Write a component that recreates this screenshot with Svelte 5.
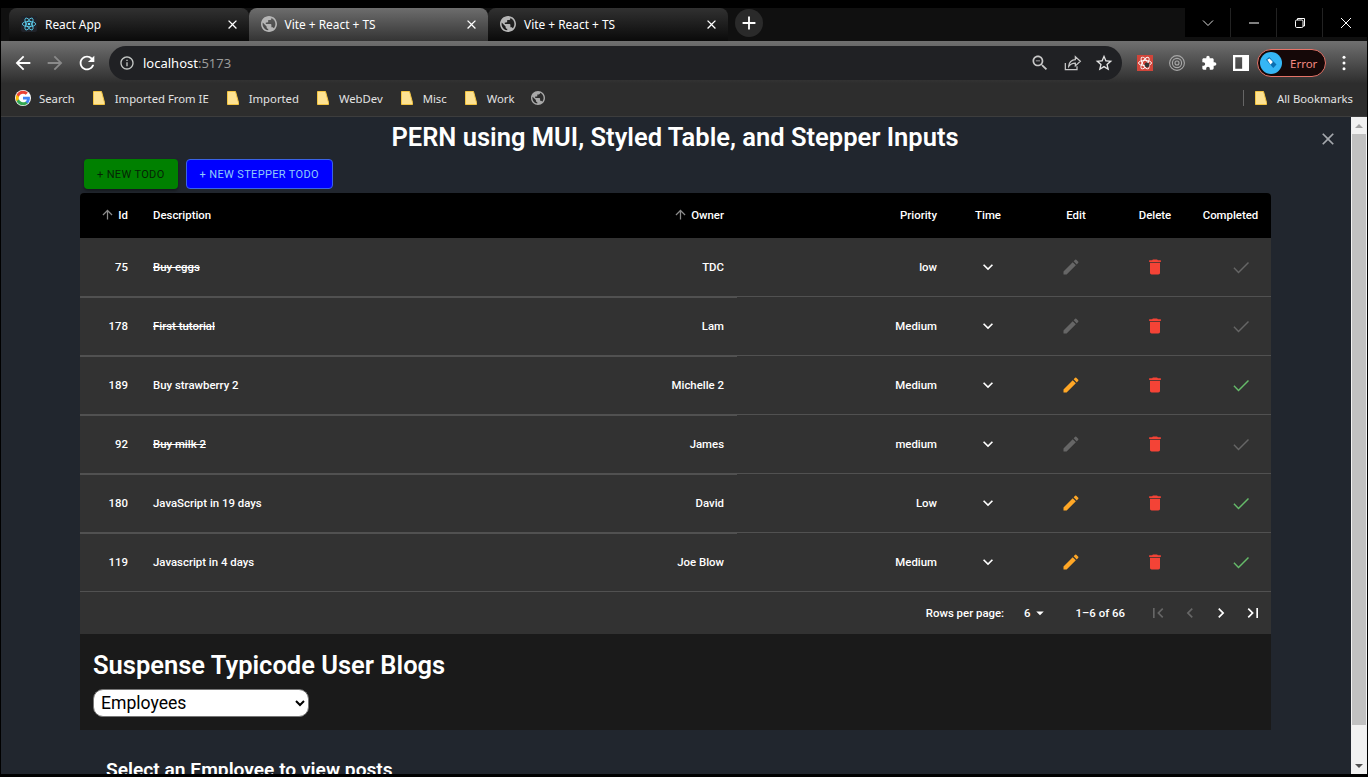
<script lang="ts">
	const rows = [
		{ id: 75, text: 'Buy eggs', owner: 'TDC', priority: 'low', done: true },
		{ id: 178, text: 'First tutorial', owner: 'Lam', priority: 'Medium', done: true },
		{ id: 189, text: 'Buy strawberry 2', owner: 'Michelle 2', priority: 'Medium', done: false },
		{ id: 92, text: 'Buy milk 2', owner: 'James', priority: 'medium', done: true },
		{ id: 180, text: 'JavaScript in 19 days', owner: 'David', priority: 'Low', done: false },
		{ id: 119, text: 'Javascript in 4 days', owner: 'Joe Blow', priority: 'Medium', done: false }
	];

	const tabs = [
		{ title: 'React App', active: false, react: true },
		{ title: 'Vite + React + TS', active: true, react: false },
		{ title: 'Vite + React + TS', active: false, react: false }
	];

	const marks = ['Imported From IE', 'Imported', 'WebDev', 'Misc', 'Work'];

	const globe =
		'M12 2C6.48 2 2 6.48 2 12s4.48 10 10 10 10-4.48 10-10S17.52 2 12 2zm-1 17.93c-3.95-.49-7-3.85-7-7.93 0-.62.08-1.21.21-1.79L9 15v1c0 1.1.9 2 2 2v1.93zm6.9-2.54c-.26-.81-1-1.39-1.9-1.39h-1v-3c0-.55-.45-1-1-1H8v-2h2c.55 0 1-.45 1-1V7h2c1.1 0 2-.9 2-2v-.41c2.93 1.19 5 4.06 5 7.41 0 2.08-.8 3.97-2.1 5.39z';
	const close =
		'M19 6.41 17.59 5 12 10.59 6.41 5 5 6.41 10.59 12 5 17.59 6.41 19 12 13.41 17.59 19 19 17.59 13.41 12z';
	const arrowUp = 'M4 12l1.41 1.41L11 7.83V20h2V7.83l5.58 5.59L20 12l-8-8-8 8z';
</script>

<div class="window">
	<div class="tabstrip">
		{#each tabs as tab}
			<div class="tab" class:active={tab.active}>
				{#if tab.react}
					<svg class="favicon" viewBox="0 0 24 24" fill="none" stroke="#61dafb" stroke-width="1.2">
						<rect x="0" y="0" width="24" height="24" rx="3" fill="#20232a" stroke="none" />
						<circle cx="12" cy="12" r="2" fill="#61dafb" stroke="none" />
						<ellipse cx="12" cy="12" rx="10" ry="4" />
						<ellipse cx="12" cy="12" rx="10" ry="4" transform="rotate(60 12 12)" />
						<ellipse cx="12" cy="12" rx="10" ry="4" transform="rotate(120 12 12)" />
					</svg>
				{:else}
					<svg class="favicon" viewBox="2 2 20 20" fill="#b5b5b5"><path d={globe} /></svg>
				{/if}
				<span class="tab-title">{tab.title}</span>
				<svg class="tab-close" viewBox="0 0 24 24" fill="#fff"><path d={close} /></svg>
			</div>
		{/each}
		<div class="new-tab">
			<svg viewBox="0 0 24 24" fill="#fff"><path d="M19 13h-6v6h-2v-6H5v-2h6V5h2v6h6v2z" /></svg>
		</div>
		<div class="win-controls">
			<div class="win-btn">
				<svg viewBox="0 0 12 12" fill="none" stroke="#ddd"><path d="M1 3.5l5 5 5-5" /></svg>
			</div>
			<div class="win-btn">
				<svg viewBox="0 0 12 12" fill="none" stroke="#fff"><path d="M1 6h10" /></svg>
			</div>
			<div class="win-btn">
				<svg viewBox="0 0 12 12" fill="none" stroke="#fff"><rect x="1.5" y="3" width="7.5" height="7.5" rx="1.2" /><path d="M3.5 3V1.5h7V9H9" /></svg>
			</div>
			<div class="win-btn last">
				<svg viewBox="0 0 12 12" fill="none" stroke="#fff"><path d="M1 1l10 10M11 1L1 11" /></svg>
			</div>
		</div>
	</div>

	<div class="toolbar">
		<svg class="nav" viewBox="0 0 24 24" fill="#fff"><path d="M20 11H7.83l5.59-5.59L12 4l-8 8 8 8 1.41-1.41L7.83 13H20v-2z" /></svg>
		<svg class="nav" viewBox="0 0 24 24" fill="#8a8a8a"><path d="M12 4l-1.41 1.41L16.17 11H4v2h12.17l-5.58 5.59L12 20l8-8z" /></svg>
		<svg class="nav" viewBox="0 0 24 24" fill="#fff"><path d="M17.65 6.35C16.2 4.9 14.21 4 12 4c-4.42 0-7.99 3.58-7.99 8s3.57 8 7.99 8c3.73 0 6.84-2.55 7.73-6h-2.08c-.82 2.33-3.04 4-5.65 4-3.31 0-6-2.69-6-6s2.69-6 6-6c1.66 0 3.14.69 4.22 1.78L13 11h7V4l-2.35 2.35z" /></svg>
		<div class="address">
			<svg class="info" viewBox="0 0 24 24" fill="#c4c7c5"><path d="M11 7h2v2h-2zm0 4h2v6h-2zm1-9C6.48 2 2 6.48 2 12s4.48 10 10 10 10-4.48 10-10S17.52 2 12 2zm0 18c-4.41 0-8-3.59-8-8s3.59-8 8-8 8 3.59 8 8-3.59 8-8 8z" /></svg>
			<span class="url">localhost<span class="port">:5173</span></span>
			<div class="addr-icons">
				<svg viewBox="0 0 24 24" fill="#c7c7c7"><path d="M15.5 14h-.79l-.28-.27C15.41 12.59 16 11.11 16 9.5 16 5.91 13.09 3 9.5 3S3 5.91 3 9.5 5.91 16 9.5 16c1.61 0 3.09-.59 4.23-1.57l.27.28v.79l5 4.99L20.49 19l-4.99-5zm-6 0C7.01 14 5 11.99 5 9.5S7.01 5 9.5 5 14 7.01 14 9.5 11.99 14 9.5 14zM7 9h5v1H7z" /></svg>
				<svg viewBox="0 0 24 24" fill="none" stroke="#c7c7c7" stroke-width="1.5"><path d="M4 12v8h14v-4M8 16c0-5 4-8 8-8V4.5L22 10l-6 5.5V12c-3 0-6 1-8 4z" /></svg>
				<svg viewBox="0 0 24 24" fill="#e3e3e3"><path d="M22 9.24l-7.19-.62L12 2 9.19 8.63 2 9.24l5.46 4.73L5.82 21 12 17.27 18.18 21l-1.63-7.03L22 9.24zM12 15.4l-3.76 2.27 1-4.28-3.32-2.88 4.38-.38L12 6.1l1.71 4.04 4.38.38-3.32 2.88 1 4.28L12 15.4z" /></svg>
			</div>
		</div>
		<div class="ext-icons">
			<svg viewBox="0 0 16 16" fill="none" stroke="#fff" stroke-width="0.9">
				<rect width="16" height="16" fill="#d0453a" stroke="none" />
				<ellipse cx="8" cy="8" rx="6.5" ry="2.6" />
				<ellipse cx="8" cy="8" rx="6.5" ry="2.6" transform="rotate(60 8 8)" />
				<ellipse cx="8" cy="8" rx="6.5" ry="2.6" transform="rotate(120 8 8)" />
				<circle cx="10" cy="10" r="2.4" fill="#333" stroke="none" />
			</svg>
			<svg viewBox="0 0 16 16" fill="none" stroke="#a8a8a8" stroke-width="1.1">
				<circle cx="8" cy="8" r="7.4" />
				<circle cx="8" cy="8" r="4.6" />
				<circle cx="8" cy="8" r="2" />
			</svg>
			<svg viewBox="0 0 24 24" fill="#fff"><path d="M20.5 11H19V7c0-1.1-.9-2-2-2h-4V3.5C13 2.12 11.88 1 10.5 1S8 2.12 8 3.5V5H4c-1.1 0-1.99.9-1.99 2v3.8H3.5c1.49 0 2.7 1.21 2.7 2.7s-1.21 2.7-2.7 2.7H2V20c0 1.1.9 2 2 2h3.8v-1.5c0-1.49 1.21-2.7 2.7-2.7 1.49 0 2.7 1.21 2.7 2.7V22H17c1.1 0 2-.9 2-2v-4h1.5c1.38 0 2.5-1.12 2.5-2.5S21.88 11 20.5 11z" /></svg>
			<svg viewBox="0 0 14 14"><path fill="#fff" fill-rule="evenodd" d="M0 0h14v14H0zM2 2v10h6V2z" /></svg>
		</div>
		<div class="profile">
			<svg viewBox="0 0 24 24">
				<circle cx="12" cy="12" r="12" fill="#35b6f5" />
				<path d="M6.5 8.5l3.5-3 8 8-3.5 4z" fill="#0b6fb0" />
				<path d="M8 8.5l2.5-1.5 3.5 4-2.5 2.5z" fill="#fff" />
			</svg>
			<span>Error</span>
		</div>
		<svg class="more" viewBox="0 0 4 16" fill="#fff">
			<circle cx="2" cy="2.2" r="1.5" /><circle cx="2" cy="8" r="1.5" /><circle cx="2" cy="13.8" r="1.5" />
		</svg>
	</div>

	<div class="bookmarks">
		<div class="mark">
			<svg class="g" viewBox="-1 -1 20 20">
				<circle cx="9" cy="9" r="10" fill="#fff" />
				<path fill="#4285F4" d="M17.64 9.2c0-.637-.057-1.251-.164-1.84H9v3.481h4.844c-.209 1.125-.843 2.078-1.796 2.717v2.258h2.908c1.702-1.567 2.684-3.874 2.684-6.615z" />
				<path fill="#34A853" d="M9 18c2.43 0 4.467-.806 5.956-2.18l-2.908-2.259c-.806.54-1.837.86-3.048.86-2.344 0-4.328-1.584-5.036-3.711H.957v2.332A8.997 8.997 0 0 0 9 18z" />
				<path fill="#FBBC05" d="M3.964 10.71A5.41 5.41 0 0 1 3.682 9c0-.593.102-1.17.282-1.71V4.958H.957A8.996 8.996 0 0 0 0 9c0 1.452.348 2.827.957 4.042l3.007-2.332z" />
				<path fill="#EA4335" d="M9 3.58c1.321 0 2.508.454 3.44 1.345l2.582-2.58C13.463.891 11.426 0 9 0A8.997 8.997 0 0 0 .957 4.958L3.964 7.29C4.672 5.163 6.656 3.58 9 3.58z" />
			</svg>
			<span>Search</span>
		</div>
		{#each marks as mark}
			<div class="mark folder-mark">
				<svg class="folder" viewBox="0 0 12 14"><path d="M0.5 0.5h8l3 11v2h-11z" fill="#fde293" stroke="#f4c542" /></svg>
				<span>{mark}</span>
			</div>
		{/each}
		<svg class="mark-globe" viewBox="2 2 20 20" fill="#a9a9a9"><path d={globe} /></svg>
		<div class="all-marks">
			<div class="mark-sep"></div>
			<div class="mark folder-mark">
				<svg class="folder" viewBox="0 0 12 14"><path d="M0.5 0.5h8l3 11v2h-11z" fill="#fde293" stroke="#f4c542" /></svg>
				<span>All Bookmarks</span>
			</div>
		</div>
	</div>

	<div class="page">
		<main class="content">
			<h1>PERN using MUI, Styled Table, and Stepper Inputs</h1>
			<svg class="page-close" viewBox="0 0 24 24" fill="#a5a8ad"><path d={close} /></svg>

			<div class="actions">
				<button class="btn green">+ New Todo</button>
				<button class="btn blue">+ New Stepper Todo</button>
			</div>

			<div class="paper">
				<table>
					<thead>
						<tr>
							<th class="col-id right">
								<svg class="sort" viewBox="0 0 24 24" fill="#8c8c8c"><path d={arrowUp} /></svg>Id
							</th>
							<th class="col-desc">Description</th>
							<th class="col-owner right">
								<svg class="sort" viewBox="0 0 24 24" fill="#8c8c8c"><path d={arrowUp} /></svg>Owner
							</th>
							<th class="col-priority right">Priority</th>
							<th class="col-time center">Time</th>
							<th class="col-edit center edit-head">Edit</th>
							<th class="col-delete center">Delete</th>
							<th class="col-done center">Completed</th>
						</tr>
					</thead>
					<tbody>
						{#each rows as row}
							<tr>
								<td class="col-id right thick">{row.id}</td>
								<td class="col-desc thick" class:struck={row.done}>{row.text}</td>
								<td class="col-owner right thick">{row.owner}</td>
								<td class="col-priority right">{row.priority}</td>
								<td class="col-time center">
									<svg class="icon" viewBox="0 0 24 24" fill="#fff"><path d="M16.59 8.59 12 13.17 7.41 8.59 6 10l6 6 6-6z" /></svg>
								</td>
								<td class="col-edit center">
									<svg class="icon" viewBox="0 0 24 24" fill={row.done ? '#666' : '#ffa726'}><path d="M3 17.25V21h3.75L17.81 9.94l-3.75-3.75L3 17.25zM20.71 7.04c.39-.39.39-1.02 0-1.41l-2.34-2.34a.9959.9959 0 0 0-1.41 0l-1.83 1.83 3.75 3.75 1.83-1.83z" /></svg>
								</td>
								<td class="col-delete center">
									<svg class="icon" viewBox="0 0 24 24" fill="#f44336"><path d="M6 19c0 1.1.9 2 2 2h8c1.1 0 2-.9 2-2V7H6v12zM19 4h-3.5l-1-1h-5l-1 1H5v2h14V4z" /></svg>
								</td>
								<td class="col-done center">
									<svg class="icon check" viewBox="0 0 24 24" fill="none" stroke={row.done ? '#666' : '#66bb6a'} stroke-width="1.7"><path d="M3.5 13l5.5 5.5L21 6.5" /></svg>
								</td>
							</tr>
						{/each}
					</tbody>
				</table>
				<div class="pager">
					<span>Rows per page:</span>
					<span class="per-page">6<svg viewBox="0 0 24 24" fill="#fff"><path d="M7 10l5 5 5-5z" /></svg></span>
					<span class="range">1–6 of 66</span>
					<div class="pager-btns">
						<svg viewBox="0 0 24 24" fill="#666"><path d="M18.41 16.59 13.82 12l4.59-4.59L17 6l-6 6 6 6zM6 6h2v12H6z" /></svg>
						<svg viewBox="0 0 24 24" fill="#666"><path d="M15.41 16.59 10.83 12l4.58-4.59L14 6l-6 6 6 6z" /></svg>
						<svg viewBox="0 0 24 24" fill="#fff"><path d="M8.59 16.59 13.17 12 8.59 7.41 10 6l6 6-6 6z" /></svg>
						<svg viewBox="0 0 24 24" fill="#fff"><path d="M5.59 7.41 10.18 12l-4.59 4.59L7 18l6-6-6-6zM16 6h2v12h-2z" /></svg>
					</div>
				</div>
			</div>

			<section class="blogs">
				<h2>Suspense Typicode User Blogs</h2>
				<select>
					<option>Employees</option>
				</select>
			</section>

			<h3>Select an Employee to view posts</h3>
		</main>

		<div class="scrollbar">
			<div class="arrow up"></div>
			<div class="thumb"></div>
			<div class="arrow down"></div>
		</div>
	</div>
</div>

<style>
	:global(body) {
		margin: 0;
		background: #000;
	}

	.window {
		width: 1368px;
		height: 777px;
		box-sizing: border-box;
		padding: 0 1px 3px;
		display: flex;
		flex-direction: column;
		overflow: hidden;
		background: #000;
		font-family: 'Noto Sans', sans-serif;
		color: #fff;
	}

	/* browser chrome */
	.tabstrip {
		height: 33px;
		flex: none;
		margin-top: 8px;
		display: flex;
		background: #101010;
		padding-left: 8px;
	}

	.tab {
		width: 239.5px;
		display: flex;
		align-items: center;
		box-sizing: border-box;
		padding: 0 9px 1px 12px;
		border-radius: 8px 8px 0 0;
		background: linear-gradient(#313131, #0a0a0a);
		font-size: 11.9px;
	}

	.tab.active {
		background: linear-gradient(#6d6d6d, #343434);
	}

	.favicon {
		width: 16px;
		height: 16px;
		flex: none;
	}

	.tab-title {
		flex: 1;
		margin-left: 8px;
	}

	.tab-close {
		width: 15px;
		height: 15px;
	}

	.new-tab {
		width: 28px;
		height: 28px;
		margin: 1px 0 0 7px;
		border-radius: 50%;
		background: #2a2a2a;
		display: flex;
		align-items: center;
		justify-content: center;
	}

	.new-tab svg {
		width: 22px;
		height: 22px;
	}

	.win-controls {
		margin-left: auto;
		display: flex;
		height: 29px;
		background: #000;
		margin-right: -1px;
	}

	.win-btn {
		width: 45px;
		border-right: 1px solid #222;
		display: flex;
		align-items: center;
		justify-content: center;
	}

	.win-btn.last {
		border-right: none;
	}

	.win-btn svg {
		width: 12px;
		height: 12px;
	}

	.toolbar {
		height: 42px;
		flex: none;
		display: flex;
		align-items: center;
		box-sizing: border-box;
		padding: 2px 0 0 11px;
		background: linear-gradient(#707070, #2e2e2e);
	}

	.nav {
		width: 22px;
		height: 22px;
		margin-right: 10px;
		flex: none;
	}

	.address {
		width: 1013px;
		height: 34px;
		margin-left: 1px;
		box-sizing: border-box;
		padding: 0 8px 0 10px;
		display: flex;
		align-items: center;
		border-radius: 17px;
		background: #202124;
		font-size: 13px;
	}

	.info {
		width: 16px;
		height: 16px;
	}

	.url {
		margin-left: 8px;
	}

	.port {
		color: #9a9a9a;
	}

	.addr-icons {
		margin-left: auto;
		display: flex;
		gap: 12px;
	}

	.addr-icons svg {
		width: 20px;
		height: 20px;
	}

	.ext-icons {
		display: flex;
		align-items: center;
		gap: 16px;
		margin-left: 15px;
	}

	.ext-icons svg {
		width: 16px;
		height: 16px;
	}

	.profile {
		width: 69px;
		height: 28px;
		box-sizing: border-box;
		margin-left: 8px;
		padding-left: 2px;
		display: flex;
		align-items: center;
		gap: 8px;
		border: 1px solid #e57368;
		border-radius: 14px;
		background: #150808;
		color: #f28b82;
		font-size: 11.5px;
	}

	.profile svg {
		width: 22px;
		height: 22px;
	}

	.more {
		width: 4px;
		height: 16px;
		margin-left: 16px;
	}

	.bookmarks {
		height: 34px;
		flex: none;
		box-sizing: border-box;
		display: flex;
		align-items: center;
		gap: 18px;
		padding: 0 0 3px 14px;
		background: #2d2d2d;
		border-bottom: 1px solid #3d3d3d;
		font-size: 11.3px;
		color: #e3e3e3;
	}

	.mark {
		display: flex;
		align-items: center;
		gap: 8px;
	}

	.folder-mark {
		gap: 10px;
	}

	.g {
		width: 16px;
		height: 16px;
	}

	.folder {
		width: 12px;
		height: 14px;
	}

	.mark-globe {
		width: 14px;
		height: 14px;
		margin-left: -2px;
	}

	.all-marks {
		margin-left: auto;
		margin-right: 14px;
		display: flex;
		align-items: center;
		gap: 11px;
	}

	.mark-sep {
		width: 1px;
		height: 16px;
		background: #666;
	}

	/* page */
	.page {
		flex: 1;
		min-height: 0;
		display: flex;
		background: #21262e;
	}

	.content {
		position: relative;
		flex: 1;
		min-width: 0;
		overflow: hidden;
		font-family: Roboto, sans-serif;
	}

	h1 {
		margin: 0;
		height: 40px;
		line-height: 40px;
		padding-right: 2px;
		font-size: 25.5px;
		font-weight: 600;
		text-align: center;
	}

	.page-close {
		position: absolute;
		top: 12px;
		right: 13px;
		width: 20px;
		height: 20px;
	}

	.actions {
		display: flex;
		gap: 8px;
		margin: 2px 0 4px 83px;
	}

	.btn {
		height: 30px;
		box-sizing: border-box;
		padding: 0 13px;
		border-radius: 4px;
		font-family: Roboto, sans-serif;
		font-size: 11px;
		font-weight: 400;
		letter-spacing: 0.35px;
		text-transform: uppercase;
	}

	.green {
		background: #008000;
		border: none;
		color: #062406;
		box-shadow: 0 2px 3px rgba(0, 0, 0, 0.35);
	}

	.blue {
		background: #0000ff;
		border: 1px solid #3a63e6;
		color: #90caf9;
	}

	.paper {
		width: 1191px;
		margin-left: 79px;
		border-radius: 4px 4px 0 0;
		overflow: hidden;
		background: #323232;
	}

	table {
		width: 100%;
		table-layout: fixed;
		border-collapse: separate;
		border-spacing: 0;
		font-size: 11.4px;
		font-weight: 500;
	}

	th {
		height: 45px;
		padding: 0 0 2px;
		box-sizing: border-box;
		background: #000;
		font-weight: 500;
		text-align: left;
	}

	td {
		height: 59px;
		box-sizing: border-box;
		padding: 0;
		border-bottom: 1px solid #515151;
	}

	td.thick {
		box-shadow: 0 1px 0 #515151;
	}

	tbody tr:last-child td {
		box-shadow: none;
	}

	.right {
		text-align: right;
	}

	.center {
		text-align: center;
	}

	.col-id {
		width: 64px;
		padding-right: 16px;
		box-sizing: border-box;
	}

	.col-desc {
		width: 512px;
		padding-left: 9px;
		box-sizing: border-box;
	}

	.col-owner {
		width: 81px;
		padding-right: 13px;
		box-sizing: border-box;
	}

	.col-priority {
		width: 217px;
		padding-right: 17px;
		box-sizing: border-box;
	}

	.col-time {
		width: 68px;
	}

	.col-edit {
		width: 98px;
	}

	.edit-head {
		padding-left: 10px;
	}

	.col-delete {
		width: 70px;
	}

	.col-done {
		width: 81px;
	}

	.struck {
		text-decoration: line-through;
	}

	.sort {
		width: 15px;
		height: 15px;
		margin-right: 3px;
		vertical-align: -3px;
	}

	.icon {
		width: 20px;
		height: 20px;
		display: inline-block;
		vertical-align: middle;
	}

	.check {
		margin-left: 21px;
	}

	.pager {
		height: 42px;
		display: flex;
		align-items: center;
		padding-right: 8px;
		justify-content: flex-end;
		font-size: 11.4px;
		font-weight: 500;
	}

	.per-page {
		display: flex;
		align-items: center;
		margin-left: 20px;
	}

	.per-page svg {
		width: 18px;
		height: 18px;
	}

	.range {
		margin-left: 27px;
	}

	.pager-btns {
		display: flex;
		gap: 11.7px;
		margin-left: 23px;
	}

	.pager-btns svg {
		width: 20px;
		height: 20px;
	}

	.blogs {
		width: 1191px;
		height: 96px;
		box-sizing: border-box;
		margin-left: 79px;
		padding: 15px 13px 0;
		background: #1a1a1a;
	}

	h2 {
		margin: 0 0 8px;
		font-size: 25.5px;
		line-height: 32px;
		font-weight: 600;
	}

	select {
		width: 216px;
		height: 28px;
		display: block;
		box-sizing: border-box;
		border-radius: 10px;
		border: 1px solid #767676;
		background: #fff;
		color: #000;
		font-family: Roboto, sans-serif;
		font-size: 17.6px;
		padding-left: 3px;
	}

	h3 {
		margin: 28px 0 0 105px;
		font-size: 19.2px;
		line-height: 24px;
		font-weight: 600;
	}

	/* scrollbar */
	.scrollbar {
		width: 16px;
		flex: none;
		display: flex;
		flex-direction: column;
		background: #f1f1f1;
	}

	.arrow {
		height: 17px;
		flex: none;
		display: flex;
		align-items: center;
		justify-content: center;
	}

	.arrow::before {
		content: '';
		border-left: 4px solid transparent;
		border-right: 4px solid transparent;
	}

	.up::before {
		border-bottom: 4px solid #a3a3a3;
	}

	.down {
		margin-top: auto;
	}

	.down::before {
		border-top: 4px solid #505050;
	}

	.thumb {
		height: 591px;
		margin: 0 1px;
		background: #c1c1c1;
	}
</style>
